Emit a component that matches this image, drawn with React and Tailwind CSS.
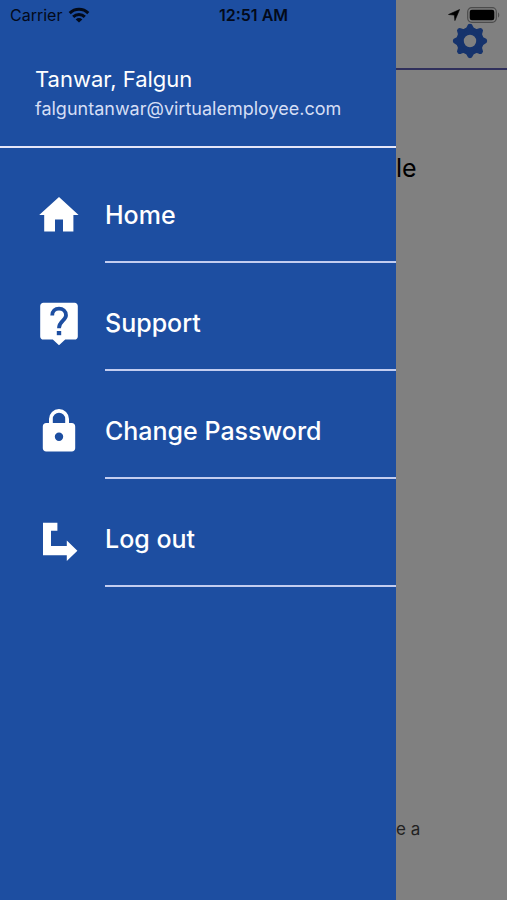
import React from 'react';

const HomeIcon = () => (
  <svg viewBox="0 0 24 24" className="size-12 shrink-0" fill="currentColor" aria-hidden="true">
    <path d="M10 20.3v-6h4v6h5.2v-8.3h2.6L12 3l-9.9 9h2.5v8.3z" />
  </svg>
);

const SupportIcon = () => (
  <svg viewBox="0 0 24 24" className="size-12 shrink-0" fill="currentColor" aria-hidden="true">
    <path d="M4.2 1.9h15.6c.9 0 1.6.7 1.6 1.6v15.2c0 .9-.7 1.6-1.6 1.6h-4.7L12 23.1l-3.1-2.8H4.2c-.9 0-1.6-.7-1.6-1.6V3.5c0-.9.7-1.6 1.6-1.6z" />
    <path d="M8.6 8.2C8.6 6 10.1 4.8 12 4.8s3.5 1.3 3.5 3.3c0 2.7-3.5 2.9-3.5 6.5" fill="none" stroke="#1d4ea1" strokeWidth="1.9" />
    <path d="M10.9 16h2.2v2.1h-2.2z" fill="#1d4ea1" />
  </svg>
);

const LockIcon = () => (
  <svg viewBox="0 0 24 24" className="size-12 shrink-0" fill="currentColor" aria-hidden="true">
    <path
      fillRule="evenodd"
      d="M18.4 8H17V6A5 5 0 0 0 7 6v2H5.6c-1 0-1.7.7-1.7 1.7v10.9c0 .9.7 1.6 1.7 1.6h12.8c1 0 1.7-.7 1.7-1.6V9.7c0-1-.7-1.7-1.7-1.7zM8.9 8V6a3.1 3.1 0 0 1 6.2 0v2zM12 17a2.1 2.1 0 1 1 0-4.2 2.1 2.1 0 0 1 0 4.2z"
    />
  </svg>
);

const LogoutIcon = () => (
  <svg viewBox="0 0 24 24" className="size-12 shrink-0" fill="currentColor" aria-hidden="true">
    <path d="M4 3.9h7.2v4H8v7.6h7.9v-2.7l5.3 5.1-5.3 5.1v-2.9H4z" />
  </svg>
);

const teeth = [0, 45, 90, 135, 180, 225, 270, 315];

const GearIcon = () => (
  <svg viewBox="-18 -18 36 36" className="size-9" fill="#16336c" aria-hidden="true">
    <circle r="9.9" fill="none" stroke="#16336c" strokeWidth="7.4" />
    {teeth.map(angle => (
      <path key={angle} transform={`rotate(${angle})`} d="M-5-12.5Q-3.2-13.4-2.9-14.8Q-2.3-17.2 0-17.2Q2.3-17.2 2.9-14.8Q3.2-13.4 5-12.5L3-10H-3z" />
    ))}
  </svg>
);

const WifiIcon = () => (
  <svg viewBox="0 0 22 16" className="h-4 w-[22px]" fill="none" stroke="#030a1a" strokeWidth="3" aria-hidden="true">
    <path d="M1.7 6.1a13.3 13.3 0 0 1 18.6 0" />
    <path d="M5.2 9.9a8.3 8.3 0 0 1 11.6 0" />
    <path d="M11 15.6 7.7 12.4a4.7 4.7 0 0 1 6.6 0z" fill="#030a1a" stroke="none" />
  </svg>
);

const LocationIcon = () => (
  <svg viewBox="0 0 12 12" className="size-3" fill="#000" stroke="#000" strokeWidth=".6" strokeLinejoin="round" aria-hidden="true">
    <path d="M11.6.5 6.9 11.6 6.3 6.1.5 5.5z" />
  </svg>
);

const BatteryIcon = () => (
  <svg viewBox="0 0 33 16" className="h-4 w-[33px]" aria-hidden="true">
    <rect x=".7" y=".7" width="28.6" height="14.6" rx="4" fill="none" stroke="#4c4c4c" strokeWidth="1.2" />
    <rect x="2.7" y="2.7" width="24.6" height="10.6" rx="2.2" fill="#000" />
    <path d="M31 5.5c1.7.6 1.7 4.4 0 5z" fill="#4c4c4c" />
  </svg>
);

const StatusBar = () => (
  <div className="pointer-events-none absolute inset-x-0 top-0 z-10 grid h-[29px] grid-cols-3 items-center px-[7px] text-[16px] text-[#030a1a]">
    <div className="flex items-center gap-[6px] pl-[3px]">
      <span>Carrier</span>
      <WifiIcon />
    </div>
    <span className="text-center font-semibold">12:51 AM</span>
    <div className="flex items-center justify-end gap-[7px]">
      <LocationIcon />
      <BatteryIcon />
    </div>
  </div>
);

const menuItems = [
  { label: 'Home', Icon: HomeIcon },
  { label: 'Support', Icon: SupportIcon },
  { label: 'Change Password', Icon: LockIcon },
  { label: 'Log out', Icon: LogoutIcon },
];

const Drawer = () => (
  <aside className="w-[78.1%] shrink-0 bg-[#1d4ea1] text-white">
    {/* Signed in user */}
    <div className="h-[148px] border-b-2 border-[#e4e6f8] pl-[35px] pt-16">
      <p className="text-[22px] leading-[30px]">Tanwar, Falgun</p>
      <p className="text-[18px] leading-[30px] text-[#d5def5]">falguntanwar@virtualemployee.com</p>
    </div>

    <nav className="pt-[7px]">
      {menuItems.map(({ label, Icon }) => (
        <button key={label} type="button" className="flex w-full pl-[35px] text-left">
          <span className="pt-9">
            <Icon />
          </span>
          <span className="ml-[22px] h-[108px] flex-1 border-b-2 border-[#c3cdf0] pt-9 text-[25px] font-medium leading-[48px]">
            {label}
          </span>
        </button>
      ))}
    </nav>
  </aside>
);

const App = () => {
  return (
    <div className="relative flex min-h-screen bg-[#808080] font-['Inter',sans-serif]">
      <StatusBar />
      <Drawer />

      {/* Dimmed page behind the drawer */}
      <main className="flex min-w-0 flex-1 flex-col text-black">
        <header className="flex h-[70px] justify-end border-b-2 border-[#30305c] pr-[19px] pt-[23px]">
          <button type="button" aria-label="Settings" className="size-9">
            <GearIcon />
          </button>
        </header>
        <p className="pt-[82px] text-[25px] leading-[32px]">le</p>
        <p className="mt-auto pb-[58px] text-[17px] leading-[26px] text-[#222222]">e a</p>
      </main>
    </div>
  );
};

export default App;
